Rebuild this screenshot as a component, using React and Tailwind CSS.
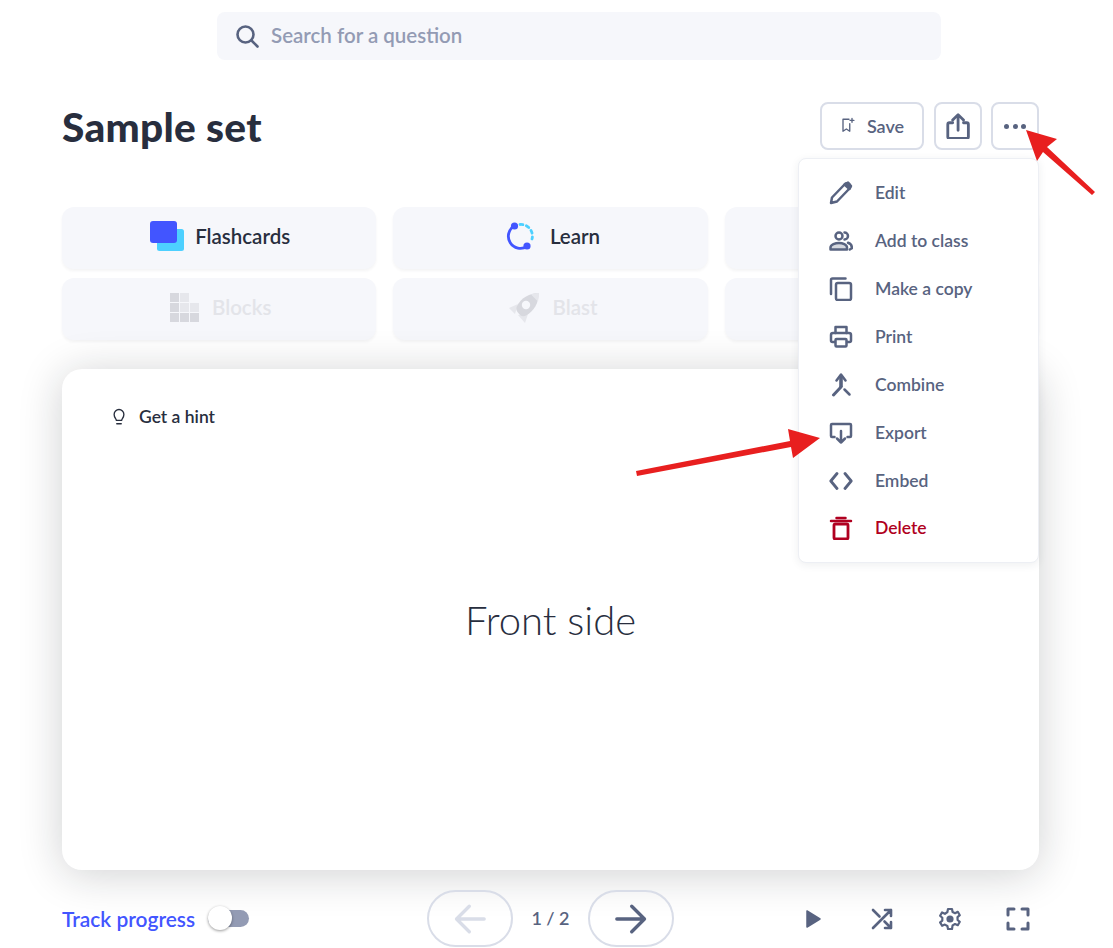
import React from "react";

const Ic = ({ children, className = "", vb = "0 0 24 24", sw = 2.5 }) => (
  <svg viewBox={vb} fill="none" stroke="currentColor" strokeWidth={sw} strokeLinecap="round" strokeLinejoin="round" className={className}>
    {children}
  </svg>
);

const menu = [
  ["Edit", <><path d="M2 22 3 16.500 15.500 3.500a2.800 2.800 0 0 1 5 4L8 20.500Z" /><path d="M15.500 3.500 20.500 8 22 5 19 1.500Z" fill="currentColor" /></>],
  ["Add to class", <><circle cx="10" cy="7" r="3.500" /><path d="M1.500 20.500v-2C1.500 15.500 6.500 14 10 14s8 1.500 8 4.500v2Z" fill="currentColor" fillOpacity="0.25" /><path d="M15.500 3.500a3.500 3.500 0 0 1 0 7M19 13.800c2 .7 3.800 2 3.800 4.500v1l-2 1.200" /></>],
  ["Make a copy", <><path d="M2 17V3a1.500 1.500 0 0 1 1.500-1.500h13" /><rect x="7" y="6" width="15" height="17" rx="1.800" /></>],
  ["Print", <><path d="M6.500 8V2h11v6" /><path d="M6 17H3.500A1.500 1.500 0 0 1 2 15.500V10a2 2 0 0 1 2-2h16a2 2 0 0 1 2 2v5.500a1.500 1.500 0 0 1-1.500 1.500H18" /><rect x="6.500" y="14" width="11" height="7.500" rx="1" /></>],
  ["Combine", <><path d="M12 3v11" strokeWidth="3.600" strokeLinecap="butt" /><path d="M7.500 7.500 12 1.500l4.500 6" strokeWidth="2.500" /><path d="M12 14 4.500 22" strokeWidth="3" /><path d="m15.500 16.500 5 5" strokeWidth="2.500" /></>],
  ["Export", <><path d="M5.500 16H3a1 1 0 0 1-1-1V4a1 1 0 0 1 1-1h18a1 1 0 0 1 1 1v11a1 1 0 0 1-1 1h-2.500" /><path d="M12 10v11.500M8 17.500l4 4 4-4" /></>],
  ["Embed", <><path d="M8 4.500 1.800 12 8 19.500M16 4.500 22.200 12 16 19.500" strokeWidth="2.800" /></>],
  ["Delete", <><path d="M2 5h20M7.500 2h9" /><rect x="5" y="8" width="14" height="15" rx="1.200" strokeWidth="2.800" /></>],
];

const tab = "h-[62px] rounded-xl bg-[#f6f7fb] shadow-[0_2px_3px_rgba(40,46,62,0.05)] flex items-center justify-center";

function FlashIcon() {
  return (
    <svg viewBox="0 0 34 30" className="w-[34px] h-[30px] mb-1">
      <rect x="7" y="8" width="27" height="22" rx="2.500" fill="#4dd0ff" />
      <rect x="0" y="0" width="27" height="22" rx="3" fill="#4255ff" />
    </svg>
  );
}

function LearnIcon() {
  return (
    <svg viewBox="0 0 28 28" className="w-7 h-7 mb-1">
      <path d="M8 4A12 12 0 0 0 21 24.500" fill="none" stroke="#4255ff" strokeWidth="2.800" />
      <path d="M14 2.500A11.500 11.500 0 0 1 26 17" fill="none" stroke="#4dd0ff" strokeWidth="2.800" strokeDasharray="3 3.500" strokeLinecap="round" />
      <circle cx="8.500" cy="4" r="3.600" fill="#4255ff" />
      <circle cx="21" cy="24" r="3.600" fill="#4255ff" />
    </svg>
  );
}

function BlocksIcon() {
  const c = ["d", "l", null, "d", "l", "l", "d", "d", "d"];
  return (
    <div className="grid grid-cols-3 gap-px w-[29px] h-[29px] mb-[3px]">
      {c.map((x, i) => <div key={i} className={x === "d" ? "bg-[#d7d8de]" : x ? "bg-[#e6e7ec]" : ""} />)}
    </div>
  );
}

function BlastIcon() {
  return (
    <svg viewBox="0 0 32 32" className="w-8 h-8 mb-[3px]">
      <path d="M10 12 1 16l6 6ZM20 22l-3 9-7-8Z" fill="#e6e7ec" />
      <path d="M30.500 1C22 1 13 6 9 14c-1 2-1 4 .5 6l2.500 3c2 1.500 4 1.500 6 .5C26 19 31 11 30.500 1Z" fill="#d7d8de" />
      <path d="M30.500 1C28 1 25 1.500 23 2.500l7 7c.5-2.500.8-5.500.5-8.500Z" fill="#e6e7ec" />
      <circle cx="18" cy="13" r="4.200" fill="#f6f7fb" />
    </svg>
  );
}

export default function App() {
  return (
    <div className="relative w-[1113px] h-[948px] overflow-hidden bg-white text-[#282e3e] font-['Lato','Liberation_Sans',sans-serif]">
      <div className="ml-[217px] mt-3 w-[724px] h-12 rounded-lg bg-[#f6f7fb] flex items-center pl-[18px] gap-[12px]">
        <Ic className="w-[24px] h-[24px] text-[#586380]" sw={2.600}><circle cx="10.500" cy="10.500" r="8" /><path d="m16.500 16.500 6 6" /></Ic>
        <span className="text-[20.500px] font-semibold text-[#939bb4] mb-[2px]">Search for a question</span>
      </div>

      <div className="ml-[62px] w-[977px] mt-[42px] h-12 flex items-center justify-between">
        <h1 className="text-[40.600px] font-black tracking-[0.3px] leading-none mt-[2px]">Sample set</h1>
        <div className="flex items-center gap-[10px] text-[#586380]">
          <button className="w-[104px] h-12 rounded-lg border-2 border-[#d9dde8] flex items-center justify-center gap-[9px] text-[18px] font-semibold">
            <Ic className="w-[18px] h-[18px]" sw={1.800}><path d="M12 3H4v16l4.500-3 4.500 3V9" /><path d="M16 2v5M13.500 4.500h5" /></Ic>
            Save
          </button>
          <button className="w-12 h-12 rounded-lg border-2 border-[#d9dde8] flex items-center justify-center">
            <Ic className="w-[26px] h-[26px] mr-[2px]" sw={2.600}><path d="M8 9H5a1.500 1.500 0 0 0-1.500 1.500V22A1.500 1.500 0 0 0 5 23.500h16a1.500 1.500 0 0 0 1.500-1.500V10.500A1.500 1.500 0 0 0 21 9h-3" /><path d="M13 16V2M8 6.500 13 1.500l5 5" /></Ic>
          </button>
          <button className="w-12 h-12 rounded-lg border-2 border-[#d9dde8] flex items-center justify-center gap-[3.500px] -ml-px">
            <span className="w-[5px] h-[5px] rounded-full bg-[#586380]" />
            <span className="w-[5px] h-[5px] rounded-full bg-[#586380]" />
            <span className="w-[5px] h-[5px] rounded-full bg-[#586380]" />
          </button>
        </div>
      </div>

      <div className="ml-[62px] w-[977px] mt-[57px] grid grid-cols-3 gap-x-[17px] gap-y-[9px] text-[20.500px] font-semibold">
        <div className={`${tab} gap-[11px] pl-[2px]`}><FlashIcon /><span className="mb-[3px]">Flashcards</span></div>
        <div className={`${tab} gap-[16px] pl-[5px]`}><LearnIcon /><span className="mb-[3px]">Learn</span></div>
        <div className={tab} />
        <div className={`${tab} gap-[13px] pl-[3px] text-[#e3e4e9]`}><BlocksIcon /><span className="mb-[3px]">Blocks</span></div>
        <div className={`${tab} gap-[13px] pl-[4px] text-[#e3e4e9]`}><BlastIcon /><span className="mb-[3px]">Blast</span></div>
        <div className={tab} />
      </div>

      <div className="ml-[62px] w-[977px] mt-[29px] h-[501px] rounded-[20px] bg-white shadow-[0_4px_44px_rgba(20,24,32,0.2)] relative flex items-center justify-center">
        <div className="absolute left-[48px] top-[35px] flex items-center gap-[11px] text-[17.500px] font-semibold">
          <Ic className="w-[18px] h-[18px]" sw={1.800}><path d="M8.500 16.500c0-2-3-3.500-3-8a6.500 6.500 0 0 1 13 0c0 4.500-3 6-3 8Z" /><path d="M9 21h6" /></Ic>
          Get a hint
        </div>
        <span className="text-[40px] font-light">Front side</span>
      </div>

      <div className="ml-[62px] w-[977px] mt-5 h-[57px] relative flex items-center justify-between">
        <div className="flex items-center gap-[13px]">
          <span className="text-[20.900px] font-semibold text-[#4255ff]">Track progress</span>
          <div className="relative w-[41px] h-[17px] rounded-full bg-[#939bb4]">
            <div className="absolute left-0 -top-[4px] w-6 h-6 rounded-full bg-white shadow-[0_1px_3px_rgba(0,0,0,0.4)]" />
          </div>
        </div>
        <div className="absolute left-[365px] top-0 flex items-center">
          <div className="w-[86px] h-[57px] rounded-[29px] border-2 border-[#d9dde8] flex items-center justify-center text-[#d9dde8]">
            <Ic className="w-[34px] h-[34px]" sw={2.400}><path d="M22 12H2.500M11.500 3 2.500 12l9 9" /></Ic>
          </div>
          <span className="w-[75px] text-center text-[18px] font-semibold text-[#586380]">1 / 2</span>
          <div className="w-[86px] h-[57px] rounded-[29px] border-2 border-[#d9dde8] flex items-center justify-center text-[#586380]">
            <Ic className="w-[34px] h-[34px]" sw={2.400}><path d="M2 12h19.500M12.500 3l9 9-9 9" /></Ic>
          </div>
        </div>
        <div className="flex items-center gap-[44px] text-[#586380] mr-[9px]">
          <Ic className="w-[24px] h-[24px]"><path d="M5 4v16l13-8Z" fill="currentColor" strokeWidth="1.500" /></Ic>
          <Ic className="w-[24px] h-[24px]" sw={2.600}><path d="M3 21 21 3M21 3h-6M21 3v6M3 3l6.500 6.500M14.500 14.500 21 21M21 21h-6M21 21v-6" /></Ic>
          <Ic className="w-[24px] h-[24px]" sw={2.200}><circle cx="12" cy="12" r="2.500" fill="currentColor" /><path d="M10 2h4l.6 3 2.500 1.200 2.700-1.400 2 3.400-2.300 2 .1 2.800 2.200 1.800-2 3.400-2.800-1.200-2.400 1.400L14 22h-4l-.6-3-2.500-1.400-2.800 1.200-2-3.400 2.200-1.800v-2.800l-2.200-2 2-3.400 2.800 1.400L9.400 5Z" /></Ic>
          <Ic className="w-[24px] h-[24px]" sw={3}><path d="M2 8V2h6M16 2h6v6M22 16v6h-6M8 22H2v-6" /></Ic>
        </div>
      </div>

      <div className="absolute left-[798px] top-[158px] w-[241px] h-[405px] rounded-lg bg-white border border-[#edeff4] shadow-[0_2px_8px_rgba(40,46,62,0.08)] pt-[10px] text-[17.500px] font-semibold text-[#586380]">
        {menu.map(([label, icon]) => (
          <div key={label} className={`h-12 flex items-center pl-[30px] gap-[22px] ${label === "Delete" ? "text-[#b00020] relative -top-px" : ""}`}>
            <Ic className="w-[24px] h-[24px]">{icon}</Ic>
            <span>{label}</span>
          </div>
        ))}
      </div>

      <svg className="absolute inset-0 w-[1113px] h-[948px] pointer-events-none" viewBox="0 0 1113 948">
        <path d="M1026 130 1057 139 1047 147 1095 192 1092 195 1043 152 1037 161Z" fill="#e81f1f" />
        <path d="M820 438 793 458 791 447 637 476 636 471 790 441 788 429Z" fill="#e81f1f" />
      </svg>
    </div>
  );
}
